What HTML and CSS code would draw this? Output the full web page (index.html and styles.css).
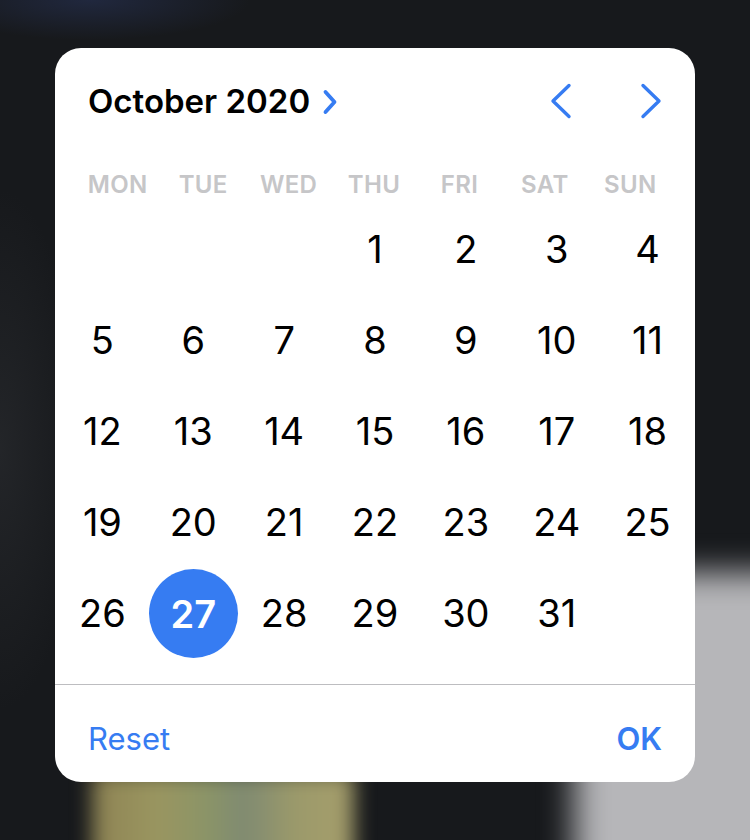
FILE: index.html
```html
<!DOCTYPE html>
<html lang="en">
<head>
<meta charset="utf-8">
<title>Date picker</title>
<link rel="stylesheet" href="styles.css">
</head>
<body>
<div class="screen">
  <div class="card">
    <div class="header">
      <button class="month-toggle">
        <span class="month-title">October 2020</span>
        <svg class="title-chevron" width="16" height="26" viewBox="0 0 16 26"><polyline points="3.5,3 12.5,13 3.5,23" fill="none" stroke="#367cf2" stroke-width="3.8" stroke-linecap="round" stroke-linejoin="round"/></svg>
      </button>
      <div class="nav">
        <button class="nav-btn" aria-label="Previous month">
          <svg width="22" height="36" viewBox="0 0 22 36"><polyline points="19,2.5 3,18 19,33.5" fill="none" stroke="#367cf2" stroke-width="3.4" stroke-linecap="round" stroke-linejoin="round"/></svg>
        </button>
        <button class="nav-btn" aria-label="Next month">
          <svg width="22" height="36" viewBox="0 0 22 36"><polyline points="3,2.5 19,18 3,33.5" fill="none" stroke="#367cf2" stroke-width="3.4" stroke-linecap="round" stroke-linejoin="round"/></svg>
        </button>
      </div>
    </div>
    <div class="weekdays">
      <span>MON</span><span>TUE</span><span>WED</span><span>THU</span><span>FRI</span><span>SAT</span><span>SUN</span>
    </div>
    <div class="days">
      <span class="day empty"></span><span class="day empty"></span><span class="day empty"></span>
      <span class="day">1</span><span class="day">2</span><span class="day">3</span><span class="day">4</span>
      <span class="day">5</span><span class="day">6</span><span class="day">7</span><span class="day">8</span><span class="day">9</span><span class="day">10</span><span class="day">11</span>
      <span class="day">12</span><span class="day">13</span><span class="day">14</span><span class="day">15</span><span class="day">16</span><span class="day">17</span><span class="day">18</span>
      <span class="day">19</span><span class="day">20</span><span class="day">21</span><span class="day">22</span><span class="day">23</span><span class="day">24</span><span class="day">25</span>
      <span class="day">26</span><span class="day selected"><span class="dot">27</span></span><span class="day">28</span><span class="day">29</span><span class="day">30</span><span class="day">31</span><span class="day empty"></span>
    </div>
    <div class="divider"></div>
    <div class="footer">
      <button class="action reset">Reset</button>
      <button class="action ok">OK</button>
    </div>
  </div>
</div>
</body>
</html>
```

FILE: styles.css
```css
* {
  box-sizing: border-box;
}

html, body {
  margin: 0;
  padding: 0;
}

body {
  font-family: "Inter", "Noto Sans", "Liberation Sans", sans-serif;
  background: #17191c;
}

.screen {
  position: relative;
  width: 750px;
  height: 840px;
  overflow: hidden;
  background:
    radial-gradient(ellipse 160px 40px at 90px 0px, rgba(40, 52, 90, 0.55), rgba(40, 52, 90, 0) 100%),
    radial-gradient(ellipse 80px 260px at 0px 450px, rgba(50, 52, 56, 0.45), rgba(50, 52, 56, 0) 100%),
    #17191c;
  padding: 48px 0 0 55px;
}

.screen::before {
  content: "";
  position: absolute;
  left: 574px;
  top: 572px;
  width: 240px;
  height: 320px;
  background: #b6b6b9;
  filter: blur(16px);
}

.screen::after {
  content: "";
  position: absolute;
  left: 92px;
  top: 772px;
  width: 262px;
  height: 110px;
  background: linear-gradient(90deg, #8e8354 0%, #9a9660 25%, #8a9468 45%, #7f8a72 58%, #9c9a6a 78%, #a69e6c 100%);
  filter: blur(10px);
}

.card {
  position: relative;
  z-index: 1;
  width: 640px;
  height: 734px;
  background: #ffffff;
  border-radius: 26px;
  display: flex;
  flex-direction: column;
  overflow: hidden;
}

button {
  font: inherit;
  background: none;
  border: 0;
  padding: 0;
  margin: 0;
  cursor: pointer;
}

.header {
  height: 106px;
  display: flex;
  align-items: center;
  justify-content: space-between;
  padding: 0 33px 0 33px;
}

.month-toggle {
  display: flex;
  align-items: center;
  gap: 12px;
}

.month-title {
  font-size: 33px;
  font-weight: 600;
  color: #000;
  letter-spacing: 0;
  line-height: 40px;
}

.title-chevron {
  display: block;
  margin-top: 1px;
}

.nav {
  display: flex;
  align-items: center;
  gap: 68px;
}

.nav-btn svg {
  display: block;
}

.weekdays {
  display: grid;
  grid-template-columns: repeat(7, 1fr);
  margin: 0 22px 0 20px;
  padding: 16px 0 3px;
  height: 49px;
}

.weekdays span {
  text-align: center;
  font-size: 24px;
  font-weight: 600;
  color: #c6c6c8;
  line-height: 30px;
  letter-spacing: 0.3px;
}

.days {
  display: grid;
  grid-template-columns: repeat(7, 1fr);
  grid-auto-rows: 91px;
  padding: 0 2px;
}

.day {
  display: flex;
  align-items: center;
  justify-content: center;
  font-size: 38px;
  font-weight: 400;
  color: #000;
}

.dot {
  width: 89px;
  height: 89px;
  border-radius: 50%;
  background: #367cf2;
  color: #fff;
  font-weight: 600;
  display: flex;
  align-items: center;
  justify-content: center;
  margin-top: 2px;
}

.divider {
  margin-top: 26px;
  height: 1px;
  background: #bdbdc0;
  flex: none;
}

.footer {
  flex: 1;
  display: flex;
  justify-content: space-between;
  align-items: flex-start;
  padding: 36px 33px 0 33px;
}

.action {
  font-size: 31px;
  line-height: 36px;
  color: #367cf2;
}

.reset {
  font-weight: 400;
}

.ok {
  font-weight: 600;
}
```
